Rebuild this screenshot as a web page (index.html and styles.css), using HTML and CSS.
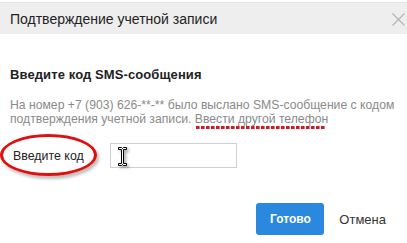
FILE: index.html
```html
<!DOCTYPE html>
<html lang="ru">
<head>
<meta charset="utf-8">
<link rel="stylesheet" href="styles.css">
</head>
<body>
<div class="dialog">
  <div class="header">
    <span class="title">Подтверждение учетной записи</span>
    <svg class="close" width="13" height="13" viewBox="0 0 13 13"><path d="M0.5 0.5L12.5 12.5M12.5 0.5L0.5 12.5" stroke="#b4b4b4" stroke-width="1.2" fill="none"/></svg>
  </div>
  <div class="body">
    <h2 class="heading">Введите код SMS-сообщения</h2>
    <p class="info">На номер +7 (903) 626-**-** было выслано SMS-сообщение с кодом подтверждения учетной записи. <span class="link">Ввести другой телефон</span></p>
    <div class="row">
      <label class="label">Введите код</label>
      <div class="input">
        <svg class="ibeam" width="9" height="19" viewBox="0 0 9 19"><path d="M0.5 0.5H3.5L4.5 1.5L5.5 0.5H8.5V2.5H5.5V16.5H8.5V18.5H5.5L4.5 17.5L3.5 18.5H0.5V16.5H3.5V2.5H0.5Z" fill="#fff" stroke="#000" stroke-width="1"/></svg>
      </div>
    </div>
  </div>
  <div class="footer">
    <button class="btn primary">Готово</button>
    <button class="btn cancel">Отмена</button>
  </div>
</div>
</body>
</html>
```
FILE: styles.css
```css
html, body { margin: 0; padding: 0; background: #fff; }
body { font-family: "Liberation Sans", Arial, sans-serif; width: 407px; height: 243px; overflow: hidden; }
.dialog { width: 407px; height: 243px; display: flex; flex-direction: column; }
.header {
  height: 31px; margin-top: 2px; background: #eeeeee; border-top: 1px solid #e2e2e2;
  display: flex; align-items: center; justify-content: space-between; padding: 0 2px 0 10px;
}
.title { font-size: 14px; color: #222; }
.close { margin-top: 2px; }
.body { padding: 0 10px; }
.heading { margin: 33px 0 0; font-size: 13px; font-weight: bold; color: #222; line-height: 16px; letter-spacing: 0.1px; }
.info { margin: 15px 0 0; font-size: 12.2px; line-height: 14px; color: #8a8a8a; }
.link { position: relative; }
.link::after {
  content: ""; position: absolute; left: 1px; right: 2px; bottom: -3px; height: 3px;
  background: repeating-linear-gradient(90deg, #e8101a 0 3px, #999 3px 4px, transparent 4px 5px);
}
.row { display: flex; align-items: center; margin-top: 17px; }
.label { position: relative; font-size: 12.4px; color: #222; width: 100px; padding-left: 3px; box-sizing: border-box; }
.label::before {
  content: ""; position: absolute; left: -10px; top: -15px; width: 91px; height: 36px;
  border: 3px solid #e01010; border-radius: 50%;
  box-shadow: 2px 3px 3px rgba(0,0,0,0.25);
}
.input {
  width: 118px; height: 23px; border: 1px solid #cfcfcf; box-sizing: content-box;
  display: flex; align-items: center; padding-left: 7px;
}
.ibeam { filter: drop-shadow(2px 2px 1.5px rgba(0,0,0,0.35)); margin-top: 1px; }
.footer { margin-top: auto; display: flex; justify-content: flex-end; align-items: center; padding: 0 17px 8px 0; gap: 11px; }
.btn { font-family: inherit; font-size: 12px; border: 0; cursor: pointer; }
.primary { background: #2a88de; color: #fff; width: 68px; height: 32px; border-radius: 3px; font-weight: bold; }
.cancel { background: transparent; color: #333; padding: 0 4px; height: 32px; font-size: 13px; }
```
